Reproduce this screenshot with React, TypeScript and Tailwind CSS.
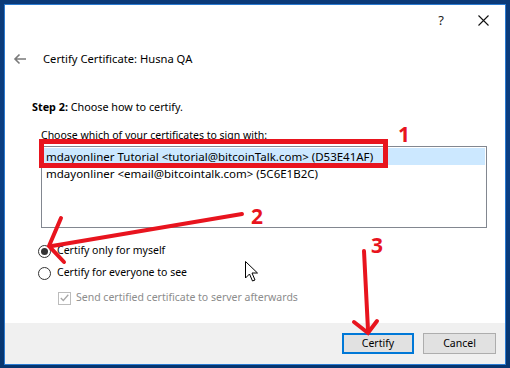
import React from 'react'

const font = { fontFamily: '"Noto Sans", "Open Sans", Arial, sans-serif' }

function Radio({ checked }: { checked?: boolean }) {
  return (
    <span className="w-[13px] h-[13px] rounded-full border border-[#333] bg-white flex items-center justify-center shrink-0">
      {checked && <span className="w-[7px] h-[7px] rounded-full bg-[#333]" />}
    </span>
  )
}

function Annotations() {
  return (
    <svg className="absolute left-0 top-0 pointer-events-none" width="510" height="368" viewBox="0 0 510 368">
      <rect x="41.5" y="141.5" width="344" height="24" fill="none" stroke="#e8141e" strokeWidth="5" />
      <g stroke="#e8141e" strokeWidth="4" strokeLinecap="round" fill="none">
        <path d="M242 214 L52 246" />
        <path d="M61 218 L49 246 L64 262" />
        <path d="M364 251 L368 330" />
        <path d="M354 322 L368 333 L377 321" />
      </g>
      <g fill="#e8141e" fontFamily="Noto Sans, Arial, sans-serif" fontWeight="700" fontSize="21">
        <text x="398" y="142">1</text>
        <text x="251" y="224">2</text>
        <text x="371" y="253">3</text>
      </g>
      <path d="M245.5 261.5 L245.5 278 L249.5 274 L252.5 281 L255 280 L252 273 L257.5 273 Z" fill="#fff" stroke="#000" strokeWidth="1" strokeLinejoin="round" />
    </svg>
  )
}

export default function App() {
  return (
    <div
      className="relative w-[510px] h-[368px] overflow-hidden bg-gradient-to-b from-[#0b3a78] via-[#0a3f85] to-[#06356f] pt-[4px] pl-[4px]"
      style={font}
    >
      <div className="w-[502px] h-[361px] bg-white border border-[#2a7ad0] flex flex-col text-[10.5px] text-black">
        <div className="h-[30px] flex items-center justify-end pr-[16px] gap-[34px] shrink-0">
          <span className="text-[13px] leading-none text-[#222]">?</span>
          <svg width="11" height="11" viewBox="0 0 11 11">
            <path d="M0.5 0.5 L10.5 10.5 M10.5 0.5 L0.5 10.5" stroke="#111" strokeWidth="1.1" />
          </svg>
        </div>
        <div className="flex items-center h-[16px] mt-[16px] pl-[8px]">
          <svg width="14" height="12" viewBox="0 0 14 12">
            <path d="M13 6 H2 M6.5 1.5 L2 6 L6.5 10.5" stroke="#7a7a7a" strokeWidth="1.6" fill="none" />
          </svg>
          <span className="ml-[16px] leading-[16px] text-[11.2px]">Certify Certificate: Husna QA</span>
        </div>
        <div className="mt-[32px] ml-[27px] leading-[16px] text-[10.8px]">
          <span className="font-bold">Step 2:</span> Choose how to certify.
        </div>
        <div className="mt-[12px] ml-[36px] leading-[16px]">Choose which of your certificates to sign with:</div>
        <div className="mt-[3px] ml-[36px] w-[446px] h-[82px] border border-[#828790] p-[1px] text-[11.5px]">
          <div className="h-[17px] bg-[#cce8ff] pl-[3px] leading-[17px] whitespace-nowrap">
            mdayonliner Tutorial &lt;tutorial@bitcoinTalk.com&gt; (D53E41AF)
          </div>
          <div className="h-[17px] pl-[3px] leading-[17px] whitespace-nowrap">
            mdayonliner &lt;email@bitcointalk.com&gt; (5C6E1B2C)
          </div>
        </div>
        <div className="mt-[15px] ml-[33px] flex flex-col gap-[6px]">
          <label className="flex items-center gap-[6px] h-[16px]">
            <Radio checked />
            <span>Certify only for myself</span>
          </label>
          <label className="flex items-center gap-[6px] h-[16px]">
            <Radio />
            <span>Certify for everyone to see</span>
          </label>
          <label className="flex items-center gap-[5px] h-[16px] ml-[20px] mt-[3px] text-[#8c8c8c]">
            <span className="w-[13px] h-[13px] border border-[#bcbcbc] flex items-center justify-center">
              <svg width="9" height="8" viewBox="0 0 9 8">
                <path d="M0.8 4 L3.3 6.5 L8.3 0.8" stroke="#a8a8a8" strokeWidth="1.3" fill="none" />
              </svg>
            </span>
            <span>Send certified certificate to server afterwards</span>
          </label>
        </div>
        <div className="mt-auto h-[41px] bg-[#f0f0f0] flex items-center justify-end gap-[9px] pr-[9px]">
          <button className="w-[72px] h-[21px] border-2 border-[#0078d7] bg-[#e1e1e1] text-[10.5px] leading-none">Certify</button>
          <button className="w-[73px] h-[21px] border border-[#adadad] bg-[#e1e1e1] text-[10.5px] leading-none">Cancel</button>
        </div>
      </div>
      <Annotations />
    </div>
  )
}
